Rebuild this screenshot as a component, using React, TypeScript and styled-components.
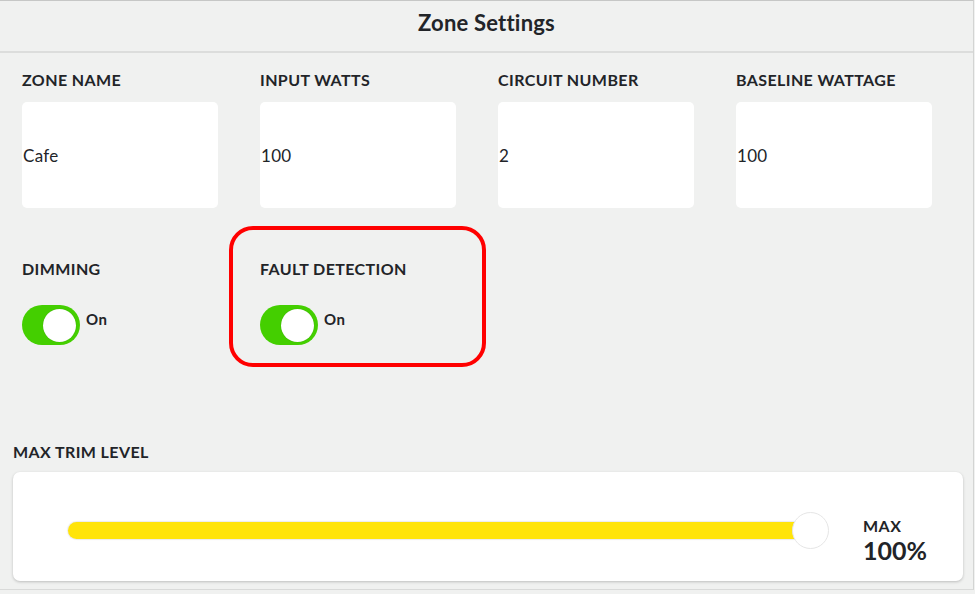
import React from "react";
import styled, { createGlobalStyle } from "styled-components";

const GlobalStyle = createGlobalStyle`
  html, body {
    margin: 0;
    padding: 0;
    background: #f0f1f0;
  }
  *, *::before, *::after { box-sizing: border-box; }
  body {
    font-family: Lato, "Open Sans", "Liberation Sans", sans-serif;
    color: #222428;
  }
`;

const Panel = styled.div`
  width: 974px;
  height: 590px;
  background: #f0f1f0;
  border-top: 1px solid #c6c7c6;
  border-right: 1px solid #d3d4d3;
  border-bottom: 1px solid #d9dad9;
  display: flex;
  flex-direction: column;
`;

const Header = styled.header`
  height: 52px;
  border-bottom: 2px solid #dcdddc;
  display: flex;
  justify-content: center;
  padding-top: 9px;
`;

const Title = styled.h1`
  margin: 0;
  font-size: 22px;
  line-height: 26px;
  font-weight: 700;
  letter-spacing: 0.2px;
  color: #222428;
`;

const Grid = styled.div`
  display: grid;
  grid-template-columns: repeat(4, 196px);
  column-gap: 42px;
  padding: 17px 0 0 22px;
`;

const Field = styled.div`
  display: flex;
  flex-direction: column;
`;

const Label = styled.div`
  font-size: 16px;
  line-height: 20px;
  font-weight: 700;
  letter-spacing: 0.4px;
  text-transform: uppercase;
  color: #222428;
  white-space: nowrap;
`;

const InputBox = styled.div`
  margin-top: 12px;
  height: 106px;
  background: #ffffff;
  border-radius: 5px;
  display: flex;
  align-items: center;
  padding-left: 1px;
  font-size: 17px;
  letter-spacing: 0.3px;
  color: #222428;
`;

const ToggleGrid = styled(Grid)`
  padding-top: 51px;
`;

const ToggleField = styled.div<{ $highlight?: boolean }>`
  position: relative;
  display: flex;
  flex-direction: column;
  ${(p) =>
    p.$highlight &&
    `
    &::before {
      content: "";
      position: absolute;
      left: -31px;
      top: -33px;
      width: 257px;
      height: 141px;
      border: 4px solid #ff0000;
      border-radius: 24px;
      pointer-events: none;
    }
  `}
`;

const ToggleRow = styled.div`
  display: flex;
  align-items: flex-start;
  margin-top: 26px;
  gap: 6px;
`;

const Switch = styled.div<{ $on: boolean }>`
  width: 58px;
  height: 40px;
  border-radius: 20px;
  background: ${(p) => (p.$on ? "#44cf00" : "#c8c9c8")};
  display: flex;
  align-items: center;
  justify-content: ${(p) => (p.$on ? "flex-end" : "flex-start")};
  padding: 0 4px;
`;

const Knob = styled.div`
  width: 33px;
  height: 33px;
  border-radius: 50%;
  background: #ffffff;
  box-shadow: 0 0 1px rgba(0, 0, 0, 0.25);
`;

const SwitchText = styled.span`
  margin-top: 5px;
  font-size: 15px;
  line-height: 18px;
  font-weight: 700;
  letter-spacing: 0.6px;
  color: #222428;
`;

const TrimSection = styled.section`
  padding: 97px 10px 0 13px;
  display: flex;
  flex-direction: column;
`;

const TrimCard = styled.div`
  margin-top: 10px;
  height: 109px;
  background: #ffffff;
  border-radius: 7px;
  box-shadow: 0 1px 3px rgba(0, 0, 0, 0.22);
  display: flex;
  align-items: flex-start;
  padding: 40px 36px 0 55px;
`;

const Slider = styled.div`
  flex: 1;
  display: flex;
  align-items: center;
  height: 37px;
`;

const Track = styled.div`
  flex: 1;
  height: 17px;
  border-radius: 9px;
  background: #ffe40a;
  box-shadow: 0 0 1px 1px rgba(0, 0, 0, 0.08);
`;

const Thumb = styled.div`
  width: 37px;
  height: 37px;
  margin-left: -19px;
  border-radius: 50%;
  background: #ffffff;
  border: 1.5px solid #e6e6e6;
`;

const Readout = styled.div`
  margin: 5px 0 0 34px;
  display: flex;
  flex-direction: column;
`;

const ReadoutCaption = styled.span`
  font-size: 16px;
  line-height: 18px;
  font-weight: 700;
  letter-spacing: 0.5px;
  color: #222428;
`;

const ReadoutValue = styled.span`
  margin-top: 1px;
  font-size: 25px;
  line-height: 28px;
  font-weight: 700;
  color: #222428;
`;

const fields = [
  { label: "Zone Name", value: "Cafe" },
  { label: "Input Watts", value: "100" },
  { label: "Circuit Number", value: "2" },
  { label: "Baseline Wattage", value: "100" },
];

export default function App() {
  return (
    <>
      <GlobalStyle />
      <Panel>
        <Header>
          <Title>Zone Settings</Title>
        </Header>
        <Grid>
          {fields.map((f) => (
            <Field key={f.label}>
              <Label>{f.label}</Label>
              <InputBox>{f.value}</InputBox>
            </Field>
          ))}
        </Grid>
        <ToggleGrid>
          <ToggleField>
            <Label>Dimming</Label>
            <ToggleRow>
              <Switch $on>
                <Knob />
              </Switch>
              <SwitchText>On</SwitchText>
            </ToggleRow>
          </ToggleField>
          <ToggleField $highlight>
            <Label>Fault Detection</Label>
            <ToggleRow>
              <Switch $on>
                <Knob />
              </Switch>
              <SwitchText>On</SwitchText>
            </ToggleRow>
          </ToggleField>
        </ToggleGrid>
        <TrimSection>
          <Label>Max Trim Level</Label>
          <TrimCard>
            <Slider>
              <Track />
              <Thumb />
            </Slider>
            <Readout>
              <ReadoutCaption>MAX</ReadoutCaption>
              <ReadoutValue>100%</ReadoutValue>
            </Readout>
          </TrimCard>
        </TrimSection>
      </Panel>
    </>
  );
}
